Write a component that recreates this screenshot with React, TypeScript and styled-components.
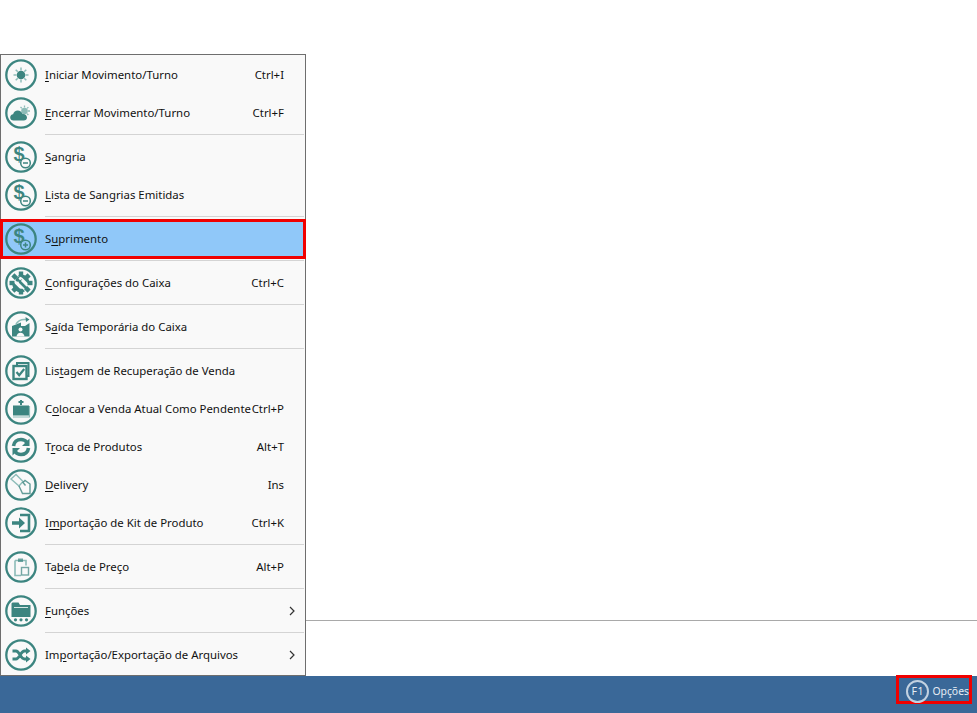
import React from "react";
import styled, { createGlobalStyle } from "styled-components";

const teal = "#3c8580";
const tealLight = "#8dbcb8";

const GlobalStyle = createGlobalStyle`
  html, body {
    margin: 0;
    padding: 0;
    height: 100%;
    background: #fff;
  }
  body {
    font-family: "Noto Sans", "Open Sans", sans-serif;
    font-size: 11.4px;
    color: #111;
    overflow: hidden;
  }
`;

const Page = styled.div`
  position: relative;
  width: 100%;
  height: 100vh;
  display: flex;
  flex-direction: column;
`;

const Content = styled.div`
  flex: 1;
`;

const BottomPanel = styled.div`
  height: 55px;
  border-top: 1px solid #a9a9a9;
`;

const StatusBar = styled.div`
  height: 37px;
  background: #3a6898;
  display: flex;
  justify-content: flex-end;
  align-items: flex-start;
  padding-right: 5px;
`;

const OptionsButton = styled.div`
  box-sizing: border-box;
  width: 76px;
  height: 29px;
  margin-top: -1px;
  border: 3px solid #f00000;
  display: flex;
  align-items: center;
  justify-content: flex-end;
  gap: 3px;
  color: #e6edf4;
`;

const KeyBadge = styled.span`
  box-sizing: border-box;
  width: 23px;
  height: 23px;
  margin-top: 3px;
  border: 2px solid #c3d2e1;
  border-radius: 50%;
  display: flex;
  align-items: center;
  justify-content: center;
  font-size: 10.5px;
  letter-spacing: 0.6px;
`;

const OptionsLabel = styled.span`
  margin-top: 2px;
  font-size: 10.4px;
`;

const Menu = styled.div`
  position: absolute;
  left: 0;
  top: 54px;
  box-sizing: border-box;
  width: 306px;
  height: 622px;
  padding: 1px 0;
  background: #f9f9f9;
  border: 1px solid #6e6e6e;
  display: flex;
  flex-direction: column;
`;

const Row = styled.div<{ $marked?: boolean }>`
  position: relative;
  flex: none;
  height: 38px;
  display: flex;
  align-items: center;
  padding-left: 4px;
  background: ${(p) => (p.$marked ? "#90c8f9" : "transparent")};

  ${(p) =>
    p.$marked &&
    `
    &::after {
      content: "";
      position: absolute;
      left: -1px;
      right: -1px;
      top: -1px;
      bottom: -1px;
      border: 3px solid #f00000;
    }
  `}
`;

const IconSlot = styled.svg`
  flex: none;
  width: 32px;
  height: 32px;
`;

const Label = styled.span`
  margin-left: 8px;
  margin-top: -2px;
  flex: 1;
  white-space: nowrap;
`;

const AccessKey = styled.span`
  text-decoration: underline;
  text-underline-offset: 2px;
`;

const Shortcut = styled.span`
  position: absolute;
  right: 21px;
  top: 11px;
  white-space: nowrap;
`;

const Chevron = styled.svg`
  position: absolute;
  right: 10px;
  width: 6px;
  height: 10px;
`;

const Separator = styled.div`
  flex: none;
  height: 6px;
  margin-left: 44px;
  margin-right: 1px;
  box-sizing: border-box;
  padding-top: 2px;

  &::before {
    content: "";
    display: block;
    height: 1px;
    background: #d4d4d4;
  }
`;

const Money = ({ plus }: { plus?: boolean }) => (
  <>
    <text x="8.500" y="20" fontFamily="Liberation Sans" fontWeight="700" fontSize="20" fill={teal}>
      $
    </text>
    <circle cx="20.500" cy="22" r="4.800" fill={plus ? "#90c8f9" : "#f9f9f9"} stroke={teal} strokeWidth="1.500" />
    <path d="M18 22h5" stroke={teal} strokeWidth="1.500" />
    {plus && <path d="M20.500 19.500v5" stroke={teal} strokeWidth="1.500" />}
  </>
);

const gearTeeth = [0, 45, 90, 135, 180, 225, 270, 315];

const icons: Record<string, React.ReactNode> = {
  sun: (
    <>
      <circle cx="16" cy="16" r="4.300" fill={teal} />
      <path
        d="M16 8.500v3M16 20.500v3M8.500 16h3M20.500 16h3M10.700 10.700l2.100 2.100M19.200 19.200l2.100 2.100M10.700 21.300l2.100-2.100M19.200 12.800l2.100-2.100"
        stroke={tealLight}
        strokeWidth="1.500"
      />
    </>
  ),
  cloud: (
    <>
      <path
        d="M19.500 8.500v2M25 14h-2M15.500 10l1.300 1.300M23.400 10.100l-1.300 1.300M23.400 18l-1.300-1.300"
        stroke={tealLight}
        strokeWidth="1.300"
      />
      <circle cx="19.500" cy="14" r="3.300" fill={tealLight} />
      <path
        d="M8.500 23.500c-2 0-3.300-1.400-3.300-3.100 0-1.700 1.200-3 2.900-3.100.5-2.300 2.400-3.800 4.600-3.800 2.300 0 4.200 1.500 4.800 3.600 2.300-.4 4.500 1.300 4.500 3.500 0 1.800-1.400 2.900-3.200 2.900z"
        fill={teal}
      />
    </>
  ),
  minus: <Money />,
  plus: <Money plus />,
  gear: (
    <>
      {gearTeeth.map((angle) => (
        <rect key={angle} x="13.800" y="4.500" width="4.400" height="5" fill={teal} transform={`rotate(${angle} 16 16)`} />
      ))}
      <path
        d="M16 7.500a8.500 8.500 0 0 1 8.300 10.200L17.500 11a6 6 0 0 0-5.500-1.500A8.500 8.500 0 0 1 16 7.500zM7.700 14.500l6.800 6.800a6 6 0 0 0 3 .5l2.500 2.500a8.500 8.500 0 0 1-12.300-9.800z"
        fill={teal}
      />
      <path d="M15 15l7 7" stroke={teal} strokeWidth="2.600" strokeLinecap="round" />
      <path d="M10.500 13.500a4.200 4.200 0 0 1 4.800-4l-1.800 2 1.500 1.800 2.300-1.300a4.200 4.200 0 0 1-6.800 1.500z" fill={teal} />
    </>
  ),
  exit: (
    <>
      <path d="M7 15l9-3.500V15h4l4.500-3v13.500H7z" fill={teal} />
      <path d="M11 13c2.500-4 6-5 10-4.500" fill="none" stroke={tealLight} strokeWidth="1.500" />
      <path d="M20.500 6l4 2.500-3.500 2.500z" fill={teal} />
      <circle cx="15.500" cy="18.500" r="2" fill="#f9f9f9" />
      <path d="M11.500 25.500c.3-2.500 1.800-3.800 4-3.800s3.700 1.300 4 3.800z" fill="#f9f9f9" />
    </>
  ),
  list: (
    <>
      <path d="M12 10V8h11.500v13H22" fill="none" stroke={teal} strokeWidth="2" />
      <rect x="8.500" y="11" width="13" height="13" fill="none" stroke={teal} strokeWidth="2.400" />
      <path d="M11.500 17l2.700 3.300 5-6.300" fill="none" stroke={teal} strokeWidth="2.200" />
    </>
  ),
  pending: (
    <>
      <path d="M16 7v5M13.500 9h5" stroke={teal} strokeWidth="2" />
      <rect x="8" y="12.500" width="16" height="10" fill={teal} />
      <path d="M8 24h16.500V13" fill="none" stroke={tealLight} strokeWidth="1.200" />
    </>
  ),
  swap: (
    <>
      <path d="M8.500 15c.5-4 3.700-6.500 7.500-6.500 2.500 0 4.500 1 6 3" fill="none" stroke={teal} strokeWidth="3.600" />
      <path d="M24.500 7.500v7.500h-7.500z" fill={teal} />
      <path d="M23.500 17c-.5 4-3.700 6.500-7.500 6.500-2.500 0-4.500-1-6-3" fill="none" stroke={teal} strokeWidth="3.600" />
      <path d="M7.500 24.500V17H15z" fill={teal} />
    </>
  ),
  delivery: (
    <>
      <path d="M6 10l5-4.500 7 7-4 4.500z" fill="none" stroke={tealLight} strokeWidth="1.400" />
      <path
        d="M14 17l3.500 7.500h7.500V15l-5-3.500-2 2 2.500 3"
        fill="none"
        stroke={teal}
        strokeOpacity="0.8"
        strokeWidth="1.400"
      />
    </>
  ),
  import: (
    <>
      <path d="M15 8h9v16H15" fill="none" stroke={teal} strokeWidth="2.600" />
      <path d="M7 14.300h7V10.500l6 5.500-6 5.500v-3.800H7z" fill={teal} />
    </>
  ),
  table: (
    <>
      <path d="M10 9.500h11v5M10 9.500v15h6" fill="none" stroke={tealLight} strokeWidth="1.600" />
      <rect x="13" y="7.500" width="5" height="3.500" fill={teal} opacity="0.7" />
      <rect x="16.500" y="16.500" width="7" height="7.500" fill="#f9f9f9" stroke={teal} strokeOpacity="0.7" strokeWidth="1.400" />
    </>
  ),
  folder: (
    <>
      <path d="M6.500 8.500v13.500h19V10H15l-1.500-2.500H7.500z" fill={teal} />
      <path d="M9 12.500h14" stroke="#d5e6e4" strokeWidth="1" />
      <circle cx="10.500" cy="24.800" r="1.600" fill={teal} />
      <circle cx="16" cy="24.800" r="1.600" fill={teal} />
      <circle cx="21.500" cy="24.800" r="1.600" fill={teal} />
    </>
  ),
  shuffle: (
    <>
      <path
        d="M7.500 12h3.500c3.500 0 4.500 8 8.500 8h2.500M7.500 20h3.500c3.500 0 4.500-8 8.500-8h2.500"
        fill="none"
        stroke={teal}
        strokeWidth="2.800"
      />
      <path d="M21 8.500l4.500 3.500-4.500 3.500zM21 16.500l4.500 3.500-4.500 3.500z" fill={teal} />
    </>
  ),
};

const MenuIcon = ({ name }: { name: string }) => (
  <IconSlot viewBox="0 0 32 32">
    <circle cx="16" cy="16" r="14.700" fill="none" stroke={teal} strokeWidth="2.300" />
    {icons[name]}
  </IconSlot>
);

type Item = {
  icon: string;
  before: string;
  key_: string;
  after: string;
  shortcut?: string;
  submenu?: boolean;
  marked?: boolean;
};

const groups: Item[][] = [
  [
    { icon: "sun", before: "", key_: "I", after: "niciar Movimento/Turno", shortcut: "Ctrl+I" },
    { icon: "cloud", before: "", key_: "E", after: "ncerrar Movimento/Turno", shortcut: "Ctrl+F" },
  ],
  [
    { icon: "minus", before: "", key_: "S", after: "angria" },
    { icon: "minus", before: "", key_: "L", after: "ista de Sangrias Emitidas" },
  ],
  [{ icon: "plus", before: "S", key_: "u", after: "primento", marked: true }],
  [{ icon: "gear", before: "", key_: "C", after: "onfigurações do Caixa", shortcut: "Ctrl+C" }],
  [{ icon: "exit", before: "S", key_: "a", after: "ída Temporária do Caixa" }],
  [
    { icon: "list", before: "Lis", key_: "t", after: "agem de Recuperação de Venda" },
    { icon: "pending", before: "C", key_: "o", after: "locar a Venda Atual Como Pendente", shortcut: "Ctrl+P" },
    { icon: "swap", before: "T", key_: "r", after: "oca de Produtos", shortcut: "Alt+T" },
    { icon: "delivery", before: "", key_: "D", after: "elivery", shortcut: "Ins" },
    { icon: "import", before: "I", key_: "m", after: "portação de Kit de Produto", shortcut: "Ctrl+K" },
  ],
  [{ icon: "table", before: "Ta", key_: "b", after: "ela de Preço", shortcut: "Alt+P" }],
  [{ icon: "folder", before: "", key_: "F", after: "unções", submenu: true }],
  [{ icon: "shuffle", before: "Im", key_: "p", after: "ortação/Exportação de Arquivos", submenu: true }],
];

export default function App() {
  return (
    <Page>
      <GlobalStyle />
      <Content />
      <BottomPanel />
      <StatusBar>
        <OptionsButton>
          <KeyBadge>F1</KeyBadge>
          <OptionsLabel>Opções</OptionsLabel>
        </OptionsButton>
      </StatusBar>
      <Menu>
        {groups.map((group, index) => (
          <React.Fragment key={index}>
            {index > 0 && <Separator />}
            {group.map((item) => (
              <Row key={item.icon + item.after} $marked={item.marked}>
                <MenuIcon name={item.icon} />
                <Label>
                  {item.before}
                  <AccessKey>{item.key_}</AccessKey>
                  {item.after}
                </Label>
                {item.shortcut && <Shortcut>{item.shortcut}</Shortcut>}
                {item.submenu && (
                  <Chevron viewBox="0 0 6 10">
                    <path d="M1 1l4 4-4 4" fill="none" stroke="#333" strokeWidth="1.200" />
                  </Chevron>
                )}
              </Row>
            ))}
          </React.Fragment>
        ))}
      </Menu>
    </Page>
  );
}
